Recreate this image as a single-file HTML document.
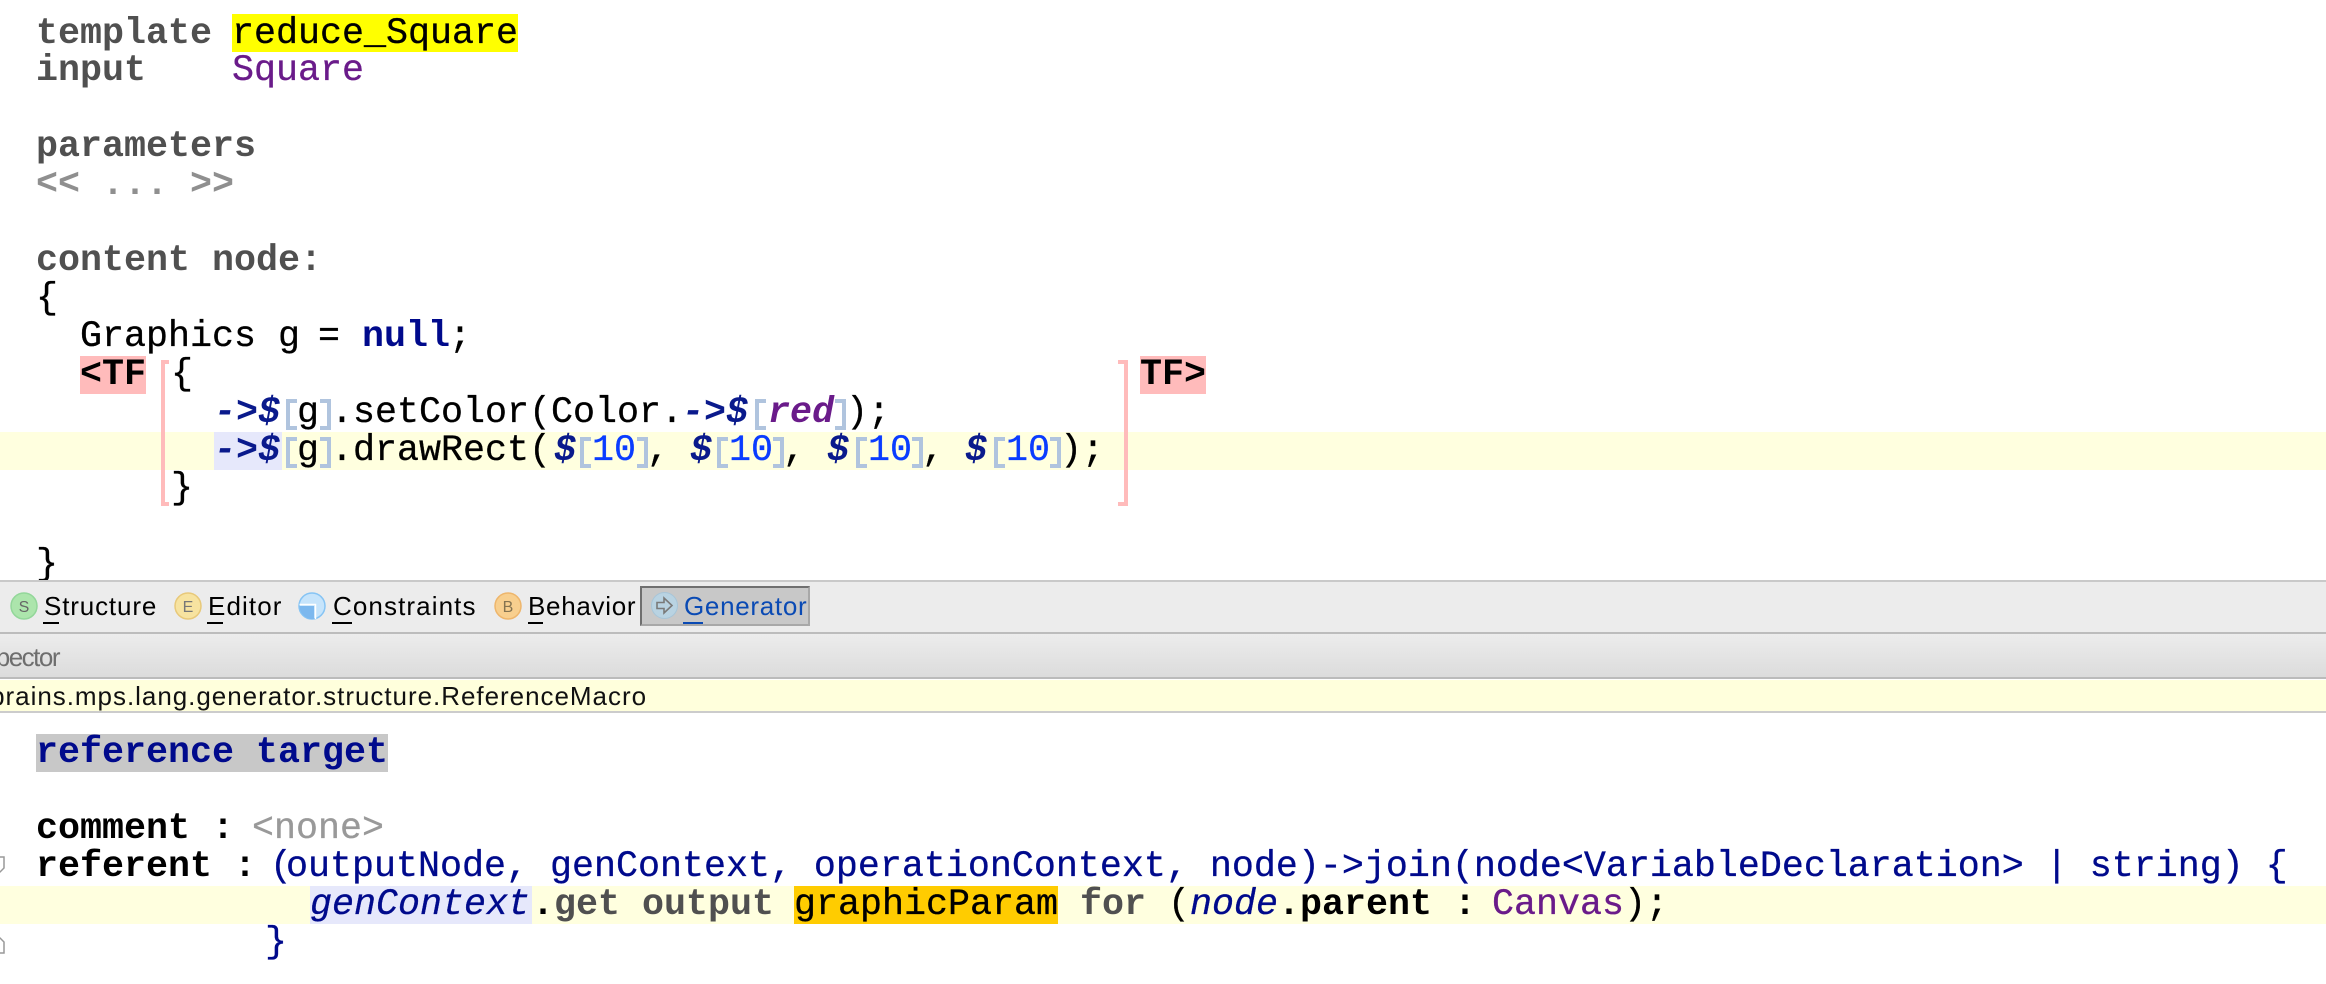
<!DOCTYPE html>
<html><head><meta charset="utf-8"><style>
html,body{margin:0;padding:0;background:#fff}
#p{position:relative;width:2326px;height:984px;overflow:hidden;background:#fff;font-family:"Liberation Mono",monospace;font-size:36.67px;color:#000}
.t{position:absolute;white-space:pre;line-height:38px;height:38px;-webkit-text-stroke:.3px currentColor}
.b{font-weight:bold;-webkit-text-stroke:0}.i{font-style:italic}
.g{color:#505050}.n{color:#000a8c}.v{color:#6a1b8a}.d{color:#0a1a8c;font-weight:bold;font-style:italic;-webkit-text-stroke:0}
.r{position:absolute}
.u{position:absolute;white-space:pre;font-family:"Liberation Sans",sans-serif;font-size:26px;line-height:30px;letter-spacing:.7px;color:#000}
.ul{position:absolute;height:2px;top:622px;background:#000}
.br{position:absolute;width:7px;height:23px;border:4px solid #b0c4de}
.bl{border-right:none}.brr{border-left:none}
svg{position:absolute}
</style></head><body><div id="p">

<!-- backgrounds -->
<div class="r" style="left:0;top:432px;width:2326px;height:38px;background:#ffffdf"></div>
<div class="r" style="left:232px;top:14px;width:286px;height:38px;background:#ffff00"></div>
<div class="r" style="left:80px;top:356px;width:66px;height:38px;background:#ffbbbb"></div>
<div class="r" style="left:1140px;top:356px;width:66px;height:38px;background:#ffbbbb"></div>
<div class="r" style="left:214px;top:432px;width:68px;height:38px;background:#e6e8fb"></div>

<!-- brackets -->
<div class="r" style="left:161px;top:360px;width:4px;height:138px;border:4px solid #ffbbbb;border-right:none"></div>
<div class="r" style="left:1118px;top:360px;width:6px;height:138px;border:4px solid #ffbbbb;border-left:none"></div>

<!-- upper editor -->
<span class="t b g" style="left:36px;top:15px">template</span>
<span class="t" style="left:232px;top:15px">reduce_Square</span>
<span class="t b g" style="left:36px;top:52px">input</span>
<span class="t v" style="left:232px;top:52px">Square</span>
<span class="t b g" style="left:36px;top:128px">parameters</span>
<span class="t b" style="left:36px;top:166px;color:#8f8f8f">&lt;&lt; ... &gt;&gt;</span>
<span class="t b g" style="left:36px;top:242px">content node:</span>
<span class="t" style="left:36px;top:280px">{</span>
<span class="t" style="left:80px;top:318px">Graphics</span>
<span class="t" style="left:278px;top:318px">g</span>
<span class="t" style="left:318px;top:318px">=</span>
<span class="t b n" style="left:362px;top:318px">null</span>
<span class="t" style="left:449px;top:318px">;</span>
<span class="t b" style="left:80px;top:356px">&lt;TF</span>
<span class="t b" style="left:1140px;top:356px">TF&gt;</span>
<span class="t" style="left:171px;top:356px">{</span>

<!-- line 10 -->
<span class="t d" style="left:214px;top:394px">-&gt;$</span>
<div class="br bl" style="left:286px;top:399px"></div>
<span class="t" style="left:297px;top:394px">g</span>
<div class="br brr" style="left:320px;top:399px"></div>
<span class="t" style="left:331px;top:394px">.setColor(Color.</span>
<span class="t d" style="left:682px;top:394px">-&gt;$</span>
<div class="br bl" style="left:755px;top:399px"></div>
<span class="t b i v" style="left:768px;top:394px">red</span>
<div class="br brr" style="left:835px;top:399px"></div>
<span class="t" style="left:846px;top:394px">);</span>

<!-- line 11 -->
<span class="t d" style="left:214px;top:432px">-&gt;$</span>
<div class="br bl" style="left:286px;top:437px"></div>
<span class="t" style="left:297px;top:432px">g</span>
<div class="br brr" style="left:320px;top:437px"></div>
<span class="t" style="left:331px;top:432px">.drawRect(</span>
<span class="t d" style="left:554px;top:432px">$</span>
<div class="br bl" style="left:580px;top:437px"></div>
<span class="t" style="left:592px;top:432px;color:#0a3cff">10</span>
<div class="br brr" style="left:637px;top:437px"></div>
<span class="t" style="left:647px;top:432px">,</span>
<span class="t d" style="left:690px;top:432px">$</span>
<div class="br bl" style="left:717px;top:437px"></div>
<span class="t" style="left:729px;top:432px;color:#0a3cff">10</span>
<div class="br brr" style="left:773px;top:437px"></div>
<span class="t" style="left:783px;top:432px">,</span>
<span class="t d" style="left:827px;top:432px">$</span>
<div class="br bl" style="left:856px;top:437px"></div>
<span class="t" style="left:868px;top:432px;color:#0a3cff">10</span>
<div class="br brr" style="left:912px;top:437px"></div>
<span class="t" style="left:922px;top:432px">,</span>
<span class="t d" style="left:965px;top:432px">$</span>
<div class="br bl" style="left:994px;top:437px"></div>
<span class="t" style="left:1006px;top:432px;color:#0a3cff">10</span>
<div class="br brr" style="left:1050px;top:437px"></div>
<span class="t" style="left:1060px;top:432px">);</span>

<span class="t" style="left:171px;top:470px">}</span>
<span class="t" style="left:36px;top:546px">}</span>

<!-- toolbar -->
<div class="r" style="left:0;top:580px;width:2326px;height:2px;background:#c9c9c9"></div>
<div class="r" style="left:0;top:582px;width:2326px;height:50px;background:#ececec"></div>
<div class="r" style="left:0;top:632px;width:2326px;height:2px;background:#bcbcbc"></div>
<div class="r" style="left:640px;top:586px;width:166px;height:36px;background:#c8c8c8;border:2px solid #a8a8a8;border-top-color:#6f6f6f;border-left-color:#6f6f6f"></div>

<svg style="left:10px;top:592px" width="28" height="28"><circle cx="14" cy="14" r="13" fill="#ace5ac" stroke="#93d79a" stroke-width="1.5"/><text x="14" y="20" text-anchor="middle" font-family="Liberation Sans" font-size="16" fill="#666">S</text></svg>
<span class="u" style="left:44px;top:591px;letter-spacing:.85px">Structure</span><div class="ul" style="left:43px;width:16px"></div>

<svg style="left:174px;top:592px" width="28" height="28"><circle cx="14" cy="14" r="13" fill="#f7e3a0" stroke="#e8c97a" stroke-width="1.5"/><text x="14" y="20" text-anchor="middle" font-family="Liberation Sans" font-size="16" fill="#777">E</text></svg>
<span class="u" style="left:208px;top:591px;letter-spacing:1.1px">Editor</span><div class="ul" style="left:207px;width:16px"></div>

<svg style="left:298px;top:592px" width="28" height="28"><circle cx="14" cy="14" r="13" fill="#c6e4fb" stroke="#86c4f4" stroke-width="1.5"/><path d="M1.5 14H16V27A13 13 0 0 1 1.5 14Z" fill="#7cb8ee"/><path d="M1.5 12.5H17.5V27" fill="none" stroke="#ffffff" stroke-width="1.4"/></svg>
<span class="u" style="left:333px;top:591px;letter-spacing:1.1px">Constraints</span><div class="ul" style="left:332px;width:20px"></div>

<svg style="left:494px;top:592px" width="28" height="28"><circle cx="14" cy="14" r="13" fill="#f8cf8e" stroke="#eeb66c" stroke-width="1.5"/><text x="14" y="20" text-anchor="middle" font-family="Liberation Sans" font-size="16" fill="#857350">B</text></svg>
<span class="u" style="left:528px;top:591px">Behavior</span><div class="ul" style="left:528px;width:15px"></div>

<svg style="left:651px;top:592px" width="27" height="27"><circle cx="13.5" cy="13.5" r="13" fill="#b9d3e2" stroke="#a7c5d8" stroke-width="1"/><path d="M6 10.5H13V6L21 13.5L13 21V16.5H6Z" fill="none" stroke="#7a7a7a" stroke-width="1.6"/></svg>
<span class="u" style="left:684px;top:591px;color:#0a4ab4">Generator</span><div class="ul" style="left:683px;width:20px;background:#0a4ab4"></div>

<!-- inspector header -->
<div class="r" style="left:0;top:634px;width:2326px;height:43px;background:linear-gradient(#ececec,#dcdcdc)"></div>
<div class="r" style="left:0;top:677px;width:2326px;height:2px;background:#bbb"></div>
<span class="u" style="right:2267px;top:642px;color:#6e6e6e;letter-spacing:-1.5px">Inspector</span>

<!-- concept strip -->
<div class="r" style="left:0;top:680px;width:2326px;height:31px;background:#ffffdc"></div>
<div class="r" style="left:0;top:711px;width:2326px;height:2px;background:#ccc"></div>
<span class="u" style="right:1679px;top:681px;letter-spacing:.97px;color:#111">jetbrains.mps.lang.generator.structure.ReferenceMacro</span>

<!-- lower editor -->
<div class="r" style="left:36px;top:734px;width:352px;height:38px;background:#c8c8c8"></div>
<div class="r" style="left:0;top:886px;width:2326px;height:38px;background:#ffffdf"></div>
<div class="r" style="left:310px;top:886px;width:222px;height:38px;background:#e6e8fb"></div>
<div class="r" style="left:794px;top:886px;width:264px;height:38px;background:#ffcc00"></div>

<span class="t b n" style="left:36px;top:734px">reference target</span>
<span class="t b" style="left:36px;top:810px">comment</span>
<span class="t b" style="left:212px;top:810px">:</span>
<span class="t" style="left:252px;top:810px;color:#999">&lt;none&gt;</span>
<span class="t b" style="left:36px;top:848px">referent</span>
<span class="t b" style="left:234px;top:848px">:</span>
<span class="t n" style="left:270px;top:848px">(</span>
<span class="t n" style="left:286px;top:848px">outputNode, genContext, operationContext, node)-&gt;join(node&lt;VariableDeclaration&gt; | string) {</span>
<span class="t i n" style="left:310px;top:886px">genContext</span>
<span class="t b" style="left:532px;top:886px">.</span>
<span class="t b g" style="left:554px;top:886px">get output</span>
<span class="t" style="left:794px;top:886px">graphicParam</span>
<span class="t b g" style="left:1080px;top:886px">for</span>
<span class="t" style="left:1168px;top:886px">(</span>
<span class="t i n" style="left:1190px;top:886px">node</span>
<span class="t b" style="left:1278px;top:886px">.parent</span>
<span class="t b" style="left:1454px;top:886px">:</span>
<span class="t v" style="left:1492px;top:886px">Canvas</span>
<span class="t" style="left:1624px;top:886px">);</span>
<span class="t n" style="left:265px;top:924px">}</span>

<!-- gutter folding marks -->
<svg style="left:0;top:856px" width="6" height="18"><path d="M-6 1H4V12L0 16H-6" fill="none" stroke="#999" stroke-width="1.5"/></svg>
<svg style="left:0;top:936px" width="6" height="18"><path d="M-6 17H4V6L0 2H-6" fill="none" stroke="#999" stroke-width="1.5"/></svg>
</div></body></html>
